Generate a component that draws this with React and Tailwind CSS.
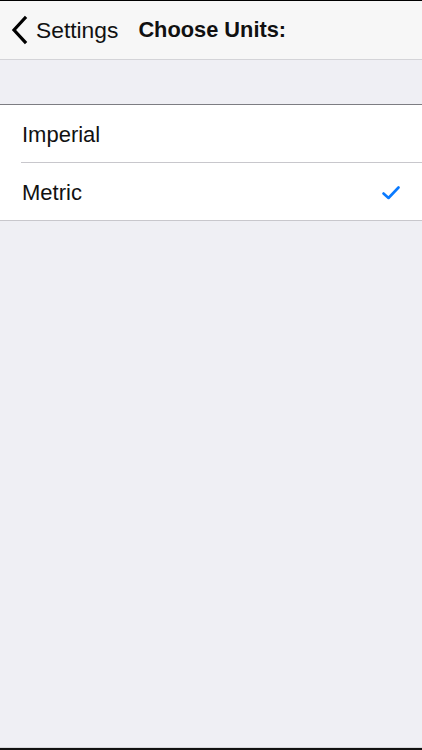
const font = { fontFamily: '"Liberation Sans", Arial, sans-serif' };

export default function App() {
  return (
    <div className="w-[422px] h-[750px] flex flex-col bg-[#efeff4] overflow-hidden" style={font}>
      <div className="h-px bg-black" />
      {/* Nav bar */}
      <div className="h-[59px] flex items-center bg-[#f7f7f7] border-b border-[#d4d4d8]">
        <div className="flex items-center pl-[8px]">
          <svg width="24" height="30" viewBox="0 0 24 30" className="text-black">
            <path d="M17 3 L6 15 L17 27" fill="none" stroke="currentColor" strokeWidth="3.2" strokeLinecap="square" />
          </svg>
          <span className="ml-[4px] text-[22.8px] text-[#111]">Settings</span>
        </div>
        <span className="ml-[20px] text-[21.8px] font-bold text-[#111]">Choose Units:</span>
      </div>

      <div className="h-[44px]" />

      {/* Options */}
      <div className="bg-white border-t border-[#7d7d82] border-b border-b-[#c8c7cc]">
        <div className="h-[58px] flex items-center ml-[21px] pl-[1px] pt-[2px] border-b border-[#c8c7cc]">
          <span className="text-[22px] text-[#111]">Imperial</span>
        </div>
        <div className="h-[57px] flex items-center justify-between pl-[22px] pr-[22px] pt-[2px]">
          <span className="text-[22px] text-[#111]">Metric</span>
          <svg width="18" height="14" viewBox="0 0 18 14">
            <path d="M1.5 7.5 L6.5 12 L16.5 1.5" fill="none" stroke="#0a7aff" strokeWidth="2.6" strokeLinecap="round" strokeLinejoin="round" />
          </svg>
        </div>
      </div>

      <div className="flex-1" />
      <div className="h-px bg-[#d8d8dc]" />
      <div className="h-[2px] bg-[#111]" />
    </div>
  );
}
